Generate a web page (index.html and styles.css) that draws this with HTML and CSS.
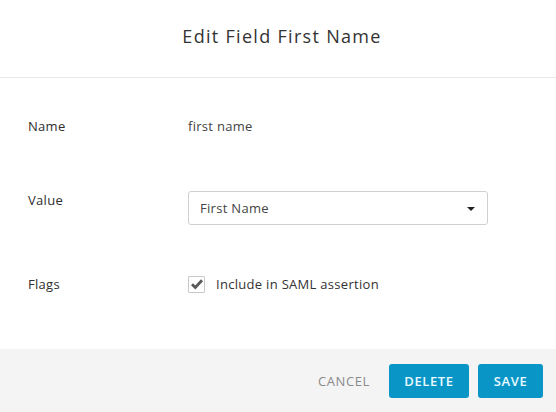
FILE: index.html
```html
<!DOCTYPE html>
<html>
<head>
<meta charset="utf-8">
<link rel="stylesheet" href="styles.css">
</head>
<body>
<div class="dialog">
  <header class="dialog-header">
    <h1 class="dialog-title">Edit Field First Name</h1>
  </header>
  <section class="dialog-body">
    <div class="row row-name">
      <div class="label">Name</div>
      <div class="value">first name</div>
    </div>
    <div class="row row-value">
      <div class="label label-select">Value</div>
      <div class="select">
        <span class="select-text">First Name</span>
        <svg class="caret" width="8" height="4" viewBox="0 0 8 4"><path d="M0 0H8L4 4Z" fill="#222"/></svg>
      </div>
    </div>
    <div class="row row-flags">
      <div class="label">Flags</div>
      <label class="check">
        <span class="box">
          <svg width="14" height="14" viewBox="0 0 14 14"><path d="M2 7.2L5.3 10.5L12 3.2" fill="none" stroke="#5a5a5a" stroke-width="2.8"/></svg>
        </span>
        <span class="check-text">Include in SAML assertion</span>
      </label>
    </div>
  </section>
  <footer class="dialog-footer">
    <button class="btn btn-link">CANCEL</button>
    <button class="btn btn-primary btn-delete">DELETE</button>
    <button class="btn btn-primary btn-save">SAVE</button>
  </footer>
</div>
</body>
</html>
```

FILE: styles.css
```css
* { box-sizing: border-box; }
html, body { margin: 0; padding: 0; background: #fff; }
body {
  font-family: "Open Sans", "Liberation Sans", sans-serif;
  color: #333;
  width: 556px;
  height: 412px;
  overflow: hidden;
}
.dialog { display: flex; flex-direction: column; height: 412px; }
.dialog-header {
  height: 78px;
  border-bottom: 1px solid #e8e8e8;
  display: flex;
  align-items: center;
  justify-content: center;
  padding: 0 0 5px 8px;
}
.dialog-title {
  margin: 0;
  font-size: 18px;
  font-weight: 400;
  color: #333;
  letter-spacing: 1.3px;
}
.dialog-body {
  padding: 39px 28px 0;
  flex: 1;
}
.row { display: flex; align-items: center; }
.label { width: 160px; font-size: 13px; letter-spacing: 0.3px; line-height: 18px; color: #2e2e2e; }
.value { font-size: 13px; letter-spacing: 0.3px; line-height: 18px; color: #444; }
.row-value { margin-top: 56px; align-items: flex-start; }
.label-select { margin-top: 0; }
.select {
  width: 300px;
  height: 34px;
  border: 1px solid #d0d0d0;
  border-radius: 3px;
  display: flex;
  align-items: center;
  justify-content: space-between;
  padding: 0 12px 0 11px;
  font-size: 13px;
  letter-spacing: 0.3px;
  color: #444;
  background: #fff;
}
.caret { display: block; margin-top: 1px; }
.row-flags { margin-top: 50px; }
.check { display: flex; align-items: center; font-size: 13px; letter-spacing: 0.3px; color: #333; }
.box {
  width: 17px;
  height: 17px;
  border: 1px solid #c8c8c8;
  border-radius: 1px;
  display: flex;
  align-items: center;
  justify-content: center;
  margin-right: 11px;
}
.box svg { display: block; }
.dialog-footer {
  height: 63px;
  background: #f4f4f4;
  display: flex;
  justify-content: flex-end;
  align-items: center;
  padding: 0 13px 0 0;
  gap: 9px;
}
.btn {
  font-family: inherit;
  font-size: 13px;
  font-weight: 600;
  letter-spacing: 0.6px;
  height: 34px;
  border: none;
  border-radius: 3px;
  padding: 0 8px;
  cursor: pointer;
}
.btn-link { background: transparent; color: #8a8a8a; font-weight: 400; padding: 0 10px; }
.btn-primary { background: #0996c7; color: #eafaff; }
.btn-delete { width: 80px; }
.btn-save { width: 65px; }
```
